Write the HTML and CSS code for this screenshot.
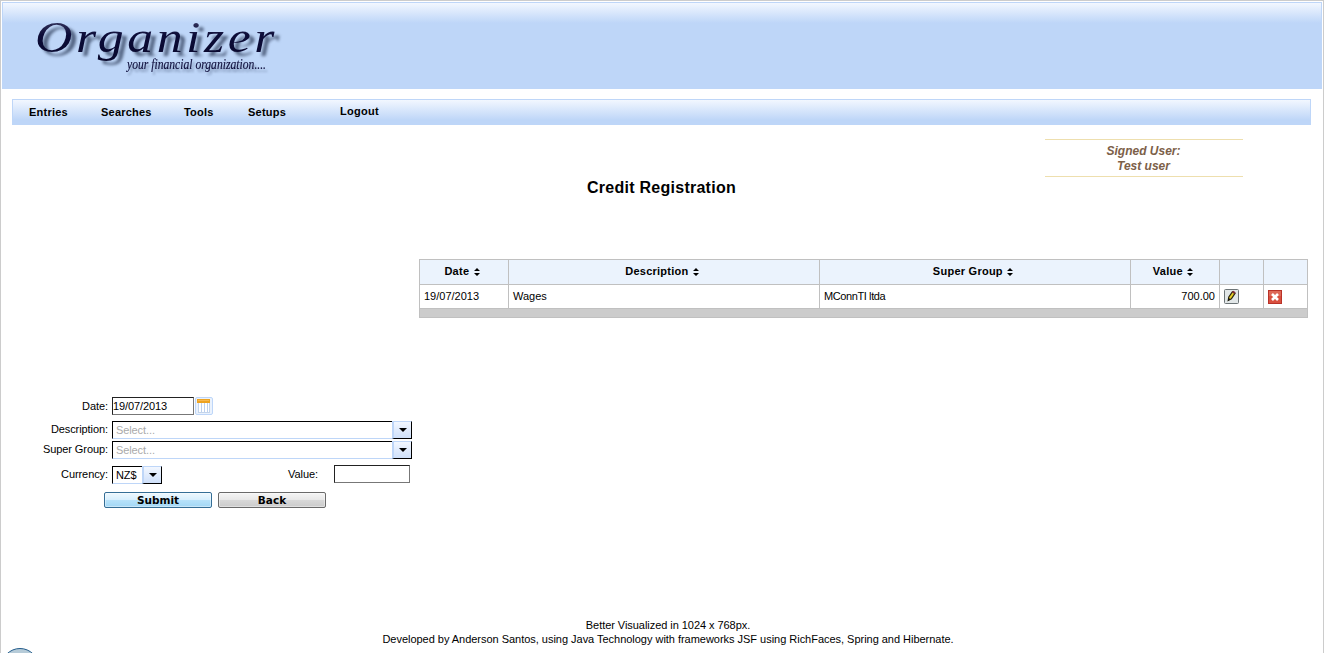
FILE: index.html
```html
<!DOCTYPE html>
<html lang="en">
<head>
<meta charset="utf-8">
<title>Organizer - Credit Registration</title>
<link rel="stylesheet" href="styles.css">
</head>
<body>
<div class="page">
  <header class="banner">
    <svg class="logo" width="300" height="85" viewBox="0 0 300 85" role="img" aria-label="Organizer">
      <defs>
        <linearGradient id="ink" x1="0" y1="0" x2="0" y2="1">
          <stop offset="0" stop-color="#4a4a72"/><stop offset=".45" stop-color="#0c0c38"/><stop offset="1" stop-color="#08082c"/>
        </linearGradient>
      </defs>
      <text class="logo-name" x="33" y="49" textLength="243" lengthAdjust="spacingAndGlyphs" fill="url(#ink)">Organizer</text>
      <text class="logo-tag" x="125" y="66" textLength="139" lengthAdjust="spacingAndGlyphs">your financial organization....</text>
    </svg>
  </header>

  <nav class="menu">
    <a class="menu-entries">Entries</a>
    <a class="menu-searches">Searches</a>
    <a class="menu-tools">Tools</a>
    <a class="menu-setups">Setups</a>
    <a class="menu-logout">Logout</a>
  </nav>

  <section class="signed">Signed User:<br>Test user</section>
  <h1 class="title">Credit Registration</h1>

  <table class="entries">
    <colgroup><col class="c-small"><col class="c-wide"><col class="c-wide"><col class="c-small"><col class="c-icon"><col class="c-icon"></colgroup>
    <thead>
      <tr>
        <th>Date <svg class="sort" width="6" height="8"><path d="M3 0L6 3H0ZM0 5H6L3 8Z"/></svg></th>
        <th>Description <svg class="sort" width="6" height="8"><path d="M3 0L6 3H0ZM0 5H6L3 8Z"/></svg></th>
        <th>Super Group <svg class="sort" width="6" height="8"><path d="M3 0L6 3H0ZM0 5H6L3 8Z"/></svg></th>
        <th>Value <svg class="sort" width="6" height="8"><path d="M3 0L6 3H0ZM0 5H6L3 8Z"/></svg></th>
        <th></th><th></th>
      </tr>
    </thead>
    <tbody>
      <tr>
        <td>19/07/2013</td><td>Wages</td><td class="group">MConnTI ltda</td><td class="num">700.00</td>
        <td><svg class="icon icon-edit" width="15" height="15" viewBox="0 0 15 15"><rect x=".5" y=".5" width="14" height="14" rx="1" fill="#e2e7e8" stroke="#6c7477"/><path d="M4.2 11.5L4.8 8L8.4 2.8L11 4.4L7.4 9.8Z" fill="#e8cf28" stroke="#28240c" stroke-width="1.2"/><path d="M8.2 2.6L9.3 1.8L11.6 3.2L10.8 5L8 3.4Z" fill="#7d2f36"/><path d="M4 12L4.4 8.8L6.5 10.3Z" fill="#111"/></svg></td>
        <td><svg class="icon icon-delete" width="14" height="14" viewBox="0 0 14 14"><rect x=".5" y=".5" width="13" height="13" fill="#d9503f" stroke="#b93228"/><path d="M1 1H13V6H1Z" fill="#e4806f" opacity=".5"/><path d="M4 4L10 10M10 4L4 10" stroke="#fff" stroke-width="2.6"/></svg></td>
      </tr>
    </tbody>
    <tfoot><tr><td colspan="6"></td></tr></tfoot>
  </table>

  <form class="form">
    <div class="row row-date">
      <label>Date:</label>
      <div class="box box-date">19/07/2013</div>
      <svg class="calendar" width="18" height="18" viewBox="0 0 18 18"><rect x=".5" y=".5" width="17" height="17" rx="1.5" fill="#eaf2fd" stroke="#bed6f8"/><rect x="3.5" y="5.5" width="11" height="10" fill="#fff" stroke="#c3d4eb"/><path d="M6.5 6V15M9.5 6V15M12.5 6V15" stroke="#bdd1ee"/><rect x="2" y="2" width="13" height="4" fill="#eda321"/><path d="M3 3.5H14" stroke="#f8b84e"/></svg>
    </div>
    <div class="row row-desc">
      <label>Description:</label>
      <div class="combo"><span class="combo-text hint">Select...</span><span class="combo-btn"><svg width="8" height="4"><path d="M0 0H8L4 4Z"/></svg></span></div>
    </div>
    <div class="row row-group">
      <label>Super Group:</label>
      <div class="combo"><span class="combo-text hint">Select...</span><span class="combo-btn"><svg width="8" height="4"><path d="M0 0H8L4 4Z"/></svg></span></div>
    </div>
    <div class="row row-currency">
      <label>Currency:</label>
      <div class="combo combo-short"><span class="combo-text">NZ$</span><span class="combo-btn"><svg width="8" height="4"><path d="M0 0H8L4 4Z"/></svg></span></div>
      <label class="value-label">Value:</label>
      <div class="box box-value"></div>
    </div>
    <div class="buttons">
      <button type="button" class="btn btn-submit">Submit</button>
      <button type="button" class="btn">Back</button>
    </div>
  </form>

  <footer class="footer"><p class="foot-a">Better Visualized in 1024 x 768px.</p><p class="foot-b">Developed by Anderson Santos, using Java Technology with frameworks JSF using RichFaces, Spring and Hibernate.</p></footer>
  <div class="orb"></div>
</div>
</body>
</html>
```
FILE: styles.css
```css
* { box-sizing: border-box; }
body { margin: 0; background: #fff; color: #000; font: 11px "Liberation Sans", Arial, sans-serif; overflow: hidden; }
.page { position: relative; width: 1324px; height: 653px; overflow: hidden; padding: 1px 1px 0; border: 1px solid #ccc; border-bottom: 0; display: flex; flex-direction: column; }

.banner { flex: none; width: 1320px; height: 87px; border: 1px solid #bed6f8; background: linear-gradient(#f2f7ff, #bed6f8 20px); }
.logo { display: block; margin-left: -1px; overflow: visible; }
.logo-name { font: italic 44px "Liberation Serif", serif; letter-spacing: 3px; filter: drop-shadow(5px 4px 1.5px rgba(45, 60, 90, .75)); }
.logo-tag { font: italic 14px "Liberation Serif", serif; fill: #10103e; stroke: #10103e; stroke-width: .15px; filter: drop-shadow(2px 3px 1px rgba(60, 75, 110, .5)); }

.menu { flex: none; display: flex; width: 1299px; height: 26px; margin: 10px 0 0 10px; padding-left: 16px; border: 1px solid #bed6f8; background: linear-gradient(#f2f7ff, #bed6f8 20px); font-weight: bold; letter-spacing: .22px; line-height: 25px; }
.menu-entries { width: 72px; }
.menu-searches { width: 83px; }
.menu-tools { width: 64px; }
.menu-setups { width: 92px; }
.menu-logout { line-height: 23px; letter-spacing: .3px; }

.signed { flex: none; width: 198px; height: 38px; margin: 14px 0 0 1043px; padding: 4px 1px 0 0; border: solid #eedfae; border-width: 1px 0; color: #7c6048; font: italic bold 12px/15px "Liberation Sans", Arial, sans-serif; text-align: center; }
.title { flex: none; width: 1319px; height: 20px; margin: 1px 0 0; text-align: center; font-size: 16px; line-height: 20px; letter-spacing: .26px; }

.entries { flex: none; width: 889px; margin: 61px 0 0 417px; border-collapse: collapse; table-layout: fixed; }
.c-small { width: 89px; }
.c-wide { width: 311px; }
.c-icon { width: 44px; }
.entries th, .entries td { border: 1px solid #c0c0c0; padding: 0 4px; text-align: left; line-height: 14px; }
.entries th { height: 25px; padding: 0 8px 2px 4px; background: #ebf3fd; text-align: center; letter-spacing: .25px; }
.entries tbody td { height: 24px; padding-bottom: 1px; }
.entries tbody .group { letter-spacing: -.4px; }
.entries tfoot td { height: 9px; padding: 0; background: #ccc; }
.entries tbody .num { text-align: right; }
.icon { display: block; }
.icon-edit, .icon-delete { margin-top: 1px; }
.sort { margin-left: 1px; vertical-align: -1px; position: relative; top: -1px; vertical-align: -2px; }

.form { flex: none; width: 420px; height: 111px; margin: 79px 0 0; }
.row { display: flex; height: 18px; }
.row label { width: 106px; margin-right: 4px; text-align: right; line-height: 18px; white-space: nowrap; letter-spacing: -.08px; }
.row-desc { margin-top: 6px; }
.row-group { margin-top: 2px; }
.row-desc label, .row-group label { line-height: 17px; }
.row-currency { margin-top: 6px; }
.row-currency label { line-height: 19px; }
.box { height: 18px; border: 1px solid #777; border-top-color: #222; border-left-color: #222; line-height: 17px; letter-spacing: -.1px; }
.box-date { width: 82px; }
.calendar { margin-left: 1px; }
.combo { display: flex; width: 300px; height: 19px; }
.combo-text { flex: 1; height: 18px; padding-left: 3px; border: solid; border-width: 1px 0 1px 1px; border-color: #000 #bed6f8 #bed6f8 #000; line-height: 17px; letter-spacing: -.1px; }
.hint { color: #aaa; }
.combo-btn { display: flex; align-items: center; justify-content: center; width: 20px; height: 18px; border: solid; border-width: 1px 1px 1px 2px; border-color: #bed6f8 #000 #000 #bed6f8; background: linear-gradient(#f2f7ff, #cfe0fa); }
.combo-short { width: 50px; margin-top: 1px; }
.row .value-label { width: 156px; margin-right: 16px; }
.box-value { width: 76px; }
.buttons { display: flex; gap: 6px; margin: 9px 0 0 102px; }
.btn { width: 108px; height: 16px; padding: 0; border: 1px solid #6a6a6a; border-radius: 2px; background: linear-gradient(#f5f5f5, #e8e8e8 48%, #d8d8d8 52%, #cbcbcb); color: #000; font: bold 10.5px/15px "DejaVu Sans", Verdana, sans-serif; box-shadow: inset 0 0 0 1px rgba(255,255,255,.4); }
.btn-submit { border-color: #356e96; background: linear-gradient(#eef8fe, #d8effd 48%, #b7e2fa 52%, #a2d7f5); }

.footer { flex: none; width: 1320px; margin-top: 110px; text-align: center; line-height: 14px; }
.footer p { margin: 0; }
.foot-a { padding-left: 12px; letter-spacing: -.05px; }
.foot-b { padding-left: 12px; letter-spacing: -.025px; }
.orb { position: absolute; left: 0; top: 647px; width: 38px; height: 38px; border: 1px solid #245d8c; border-radius: 50%; background: #b6cbd8; }
```
